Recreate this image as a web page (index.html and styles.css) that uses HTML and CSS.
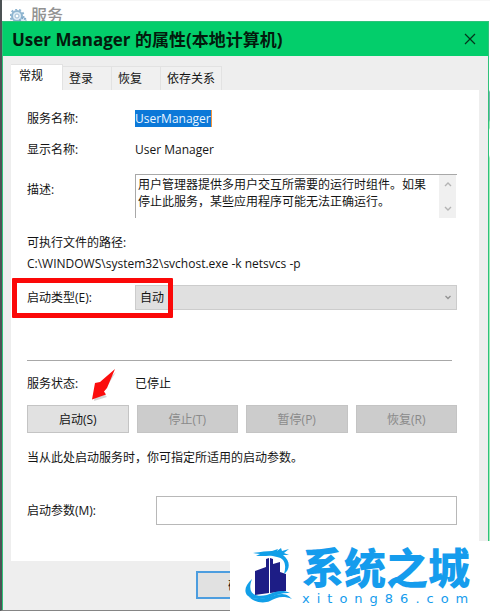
FILE: index.html
```html
<!DOCTYPE html>
<html lang="zh-CN">
<head>
<meta charset="utf-8">
<meta name="viewport" content="width=device-width, initial-scale=1">
<title>User Manager 的属性(本地计算机)</title>
<link rel="stylesheet" href="styles.css">
</head>
<body>
<div class="desktop">
  <header class="backdrop">
    <svg class="gear" width="18" height="18" viewBox="0 0 18 18" aria-hidden="true">
      <circle cx="7" cy="7" r="5" fill="#dceaf4" stroke="#8fb5d0" stroke-width="2"/>
      <circle cx="7" cy="7" r="6.5" fill="none" stroke="#8fb5d0" stroke-width="2" stroke-dasharray="2 2"/>
      <circle cx="7" cy="7" r="2" fill="#fff" stroke="#9dbdd4"/>
      <circle cx="13" cy="12" r="3" fill="#dceaf4" stroke="#7fa9c7" stroke-width="2" stroke-dasharray="2 1"/>
    </svg>
    <span>服务</span>
  </header>

  <main class="dialog">
    <div class="titlebar">
      <h1>User Manager 的属性(本地计算机)</h1>
      <button class="close" type="button" aria-label="关闭">
        <svg width="12" height="12" viewBox="0 0 12 12"><path d="M1 1 11 11M11 1 1 11" fill="none" stroke="#04331b" stroke-width="1.2"/></svg>
      </button>
    </div>

    <div class="tabs" role="tablist">
      <button class="tab active" type="button" role="tab" aria-selected="true">常规</button>
      <button class="tab" type="button" role="tab">登录</button>
      <button class="tab" type="button" role="tab">恢复</button>
      <button class="tab" type="button" role="tab">依存关系</button>
    </div>

    <form class="panel">
      <div class="row">
        <span>服务名称:</span>
        <span><mark>UserManager</mark></span>
      </div>
      <div class="row">
        <span>显示名称:</span>
        <span>User Manager</span>
      </div>
      <div class="row description">
        <label for="desc">描述:</label>
        <div class="memo">
          <textarea id="desc" readonly>用户管理器提供多用户交互所需要的运行时组件。如果
停止此服务，某些应用程序可能无法正确运行。</textarea>
          <div class="scroll" aria-hidden="true">
            <svg width="8" height="6" viewBox="0 0 8 6"><path d="M1 5 4 2 7 5" fill="none" stroke="#b4b4b4" stroke-width="1.4"/></svg>
            <svg width="8" height="6" viewBox="0 0 8 6"><path d="M1 1 4 4 7 1" fill="none" stroke="#b4b4b4" stroke-width="1.4"/></svg>
          </div>
        </div>
      </div>
      <div class="path">
        <p>可执行文件的路径:</p>
        <p>C:\WINDOWS\system32\svchost.exe -k netsvcs -p</p>
      </div>
      <div class="row startup">
        <label for="type">启动类型(E):</label>
        <div class="picker">
          <select id="type"><option>自动</option></select>
          <svg class="chevron" width="6" height="5" viewBox="0 0 6 5" aria-hidden="true"><path d="M0.5 1 3 3.5 5.5 1" fill="none" stroke="#929292" stroke-width="1.3"/></svg>
        </div>
        <div class="highlight"></div>
      </div>
      <hr>
      <div class="row status">
        <span>服务状态:</span>
        <span>已停止</span>
        <svg class="arrow" width="30" height="36" viewBox="0 0 30 36" aria-hidden="true">
          <path d="M25 3 5 21 3 32 16 28 12 24Z" fill="#999" opacity=".4" transform="translate(1 1)"/>
          <path d="M25 1 10 14 5 15 2 31.500 16 26.500 14 23.500 17 20Z" fill="#fb0d0d"/>
        </svg>
      </div>
      <div class="actions">
        <button type="button">启动(S)</button>
        <button type="button" disabled>停止(T)</button>
        <button type="button" disabled>暂停(P)</button>
        <button type="button" disabled>恢复(R)</button>
      </div>
      <p class="hint">当从此处启动服务时，你可指定所适用的启动参数。</p>
      <div class="row params">
        <label for="args">启动参数(M):</label>
        <input id="args" type="text">
      </div>
    </form>

    <footer class="footer"><button class="ok" type="button">确定</button></footer>
  </main>

  <aside class="watermark">
    <svg class="logo" width="50" height="60" viewBox="0 0 50 60" aria-hidden="true">
      <path d="M11 27 22 23V15L25 14V49L11 51Z" fill="#1d1d86"/>
      <path d="M26 14 29 15V20L36 18V28L42 30V47L26 49Z" fill="#1d1d86"/>
      <path d="M9 9C17 8 22 7 28 7L34 5 33 7 37 4 38 7 45 5 40 9 45 11 39 11C47 17 46 26 40 30 43 20 40 14 33 13 27 11 23 12 19 12L12 12 16 10Z" fill="#119fe8"/>
      <path d="M8 35C-3 45 0 55 15 55 27 55 34 48 46 49 37 45 31 48 23 51 9 54 3 48 8 35Z" fill="#119fe8"/>
      <path d="M5 53C20 58 29 50 38 50 43 50 46 53 48 55 38 51 32 54 26 57 19 60 10 58 5 53Z" fill="#119fe8"/>
    </svg>
    <div class="brand">
      <strong>系统之城</strong>
      <span>xitong86.com</span>
    </div>
  </aside>
</div>
</body>
</html>
```
FILE: styles.css
```css
* {
  box-sizing: border-box;
}

body {
  margin: 0;
  font: 12px/21px "Open Sans", "Noto Sans CJK SC", sans-serif;
  color: #141414;
}

p, h1 {
  margin: 0;
}

button, select, input, textarea {
  font: inherit;
  color: inherit;
  border-radius: 0;
}

.desktop {
  position: relative;
  display: flex;
  flex-direction: column;
  min-height: 100vh;
  padding-right: 1px;
  border-left: 2px solid #4c5254;
  border-bottom: 1px solid #858585;
  background: linear-gradient(#fff 90px, #79b5ae 92px, #79b5ae 120px, #a0efb8 122px, #a0efb8 128px, #fff 130px, #fff 155px, #a0efb8 158px);
}

.backdrop {
  display: flex;
  align-items: flex-start;
  gap: 3px;
  height: 21px;
  padding: 4px 8px 0;
  margin-right: -1px;
  overflow: hidden;
  background: #fff;
  border-top: 1px solid #f6f6f6;
  color: #929292;
  font-size: 16px;
  font-weight: 500;
}

.gear {
  margin-top: 4px;
}

.dialog {
  display: flex;
  flex-direction: column;
  flex: 1;
  border: 1px solid #2fc27a;
  border-width: 0 1px;
  background: #eee;
}

.titlebar {
  display: flex;
  justify-content: space-between;
  align-items: center;
  height: 35px;
  padding: 0 12px 0 9px;
  background: #03ce6b;
  border-top: 1px solid #2fc27a;
}

.titlebar h1 {
  font-size: 17px;
  font-weight: 700;
  color: #031a0d;
}

.close {
  display: flex;
  padding: 0;
  border: 0;
  background: none;
}

.tabs {
  display: flex;
  align-items: flex-end;
  height: 34px;
  padding-left: 8px;
}

.tab {
  height: 24px;
  padding: 0 6px;
  border: 1px solid #e2e2e2;
  border-width: 1px 1px 0 0;
  background: #f0f0f0;
  text-align: left;
}

.tab.active {
  height: 26px;
  padding: 0 19px 4px 8px;
  background: #fff;
}

.tab:nth-child(2),
.tab:nth-child(3) {
  width: 49px;
}

.panel {
  padding: 13px 22px 36px 16px;
  margin: 0 9px 0 8px;
  background: #fff;
}

.row {
  display: grid;
  grid-template-columns: 108px 1fr;
  align-items: center;
  position: relative;
  height: 31px;
}

mark {
  display: inline-block;
  height: 17px;
  line-height: 17px;
  background: #0b78d8;
  border-right: 1px solid #f0953f;
  color: #e8f4ff;
}

.row.description {
  height: 44px;
  margin-top: 9px;
}

.description label {
  padding-bottom: 14px;
}

.memo {
  display: flex;
  height: 44px;
  border: 1px solid #a8a8a8;
  border-width: 1px 0 0 1px;
}

.memo textarea {
  flex: 1;
  min-width: 0;
  padding: 1px 2px;
  border: 0;
  outline: 0;
  resize: none;
  overflow: hidden;
  line-height: 17px;
  white-space: pre;
}

.scroll {
  display: flex;
  flex-direction: column;
  justify-content: space-between;
  align-items: center;
  width: 17px;
  padding: 6px 0;
  margin-right: 1px;
  background: #f0f0f0;
}

.path {
  margin-top: 14px;
}

.row.startup {
  height: 25px;
  margin-top: 11px;
}

.picker {
  position: relative;
}

.picker select {
  display: block;
  width: 100%;
  height: 25px;
  padding: 0 4px;
  appearance: none;
  background: #e0e0e0;
  border: 1px solid #ccc;
}

.chevron {
  position: absolute;
  right: 6px;
  top: 10px;
}

.highlight {
  position: absolute;
  left: -15px;
  top: -7px;
  width: 161px;
  height: 40px;
  border: 5px solid #fb0808;
  border-radius: 1px;
}

hr {
  height: 1px;
  margin: 50px 5px 0 0;
  border: 0;
  background: #a8a8a8;
}

.row.status {
  margin-top: 7px;
}

.arrow {
  position: absolute;
  left: 63px;
  top: 0;
}

.actions {
  display: grid;
  grid-template-columns: repeat(4, 1fr);
  gap: 8px;
  margin-top: 6px;
}

.actions button {
  height: 28px;
  padding: 0;
  border: 1px solid #c4c4c4;
  background: #e1e1e1;
}

.actions button:disabled {
  background: #ccc;
  color: #8a8a8a;
}

.hint {
  margin-top: 14px;
}

.row.params {
  grid-template-columns: 129px 1fr;
  height: 29px;
  margin-top: 28px;
}

.params input {
  width: 100%;
  height: 29px;
  border: 1px solid #b8b8b8;
  background: #fff;
}

.footer {
  padding: 10px 0 0 193px;
}

.ok {
  width: 88px;
  height: 28px;
  padding: 0;
  border: 2px solid #4c9ddf;
  background: #e1e1e1;
}

.watermark {
  position: absolute;
  right: 0;
  bottom: -1px;
  display: flex;
  gap: 8px;
  width: 260px;
  height: 70px;
  padding: 3px 0 0 14px;
  background: #fff;
  color: #159ced;
}

.brand {
  display: flex;
  flex-direction: column;
}

.brand strong {
  font-size: 42px;
  font-weight: 900;
  line-height: 48px;
}

.brand span {
  font-family: "DejaVu Sans", sans-serif;
  font-size: 13px;
  line-height: 14px;
  letter-spacing: 7px;
}
```
